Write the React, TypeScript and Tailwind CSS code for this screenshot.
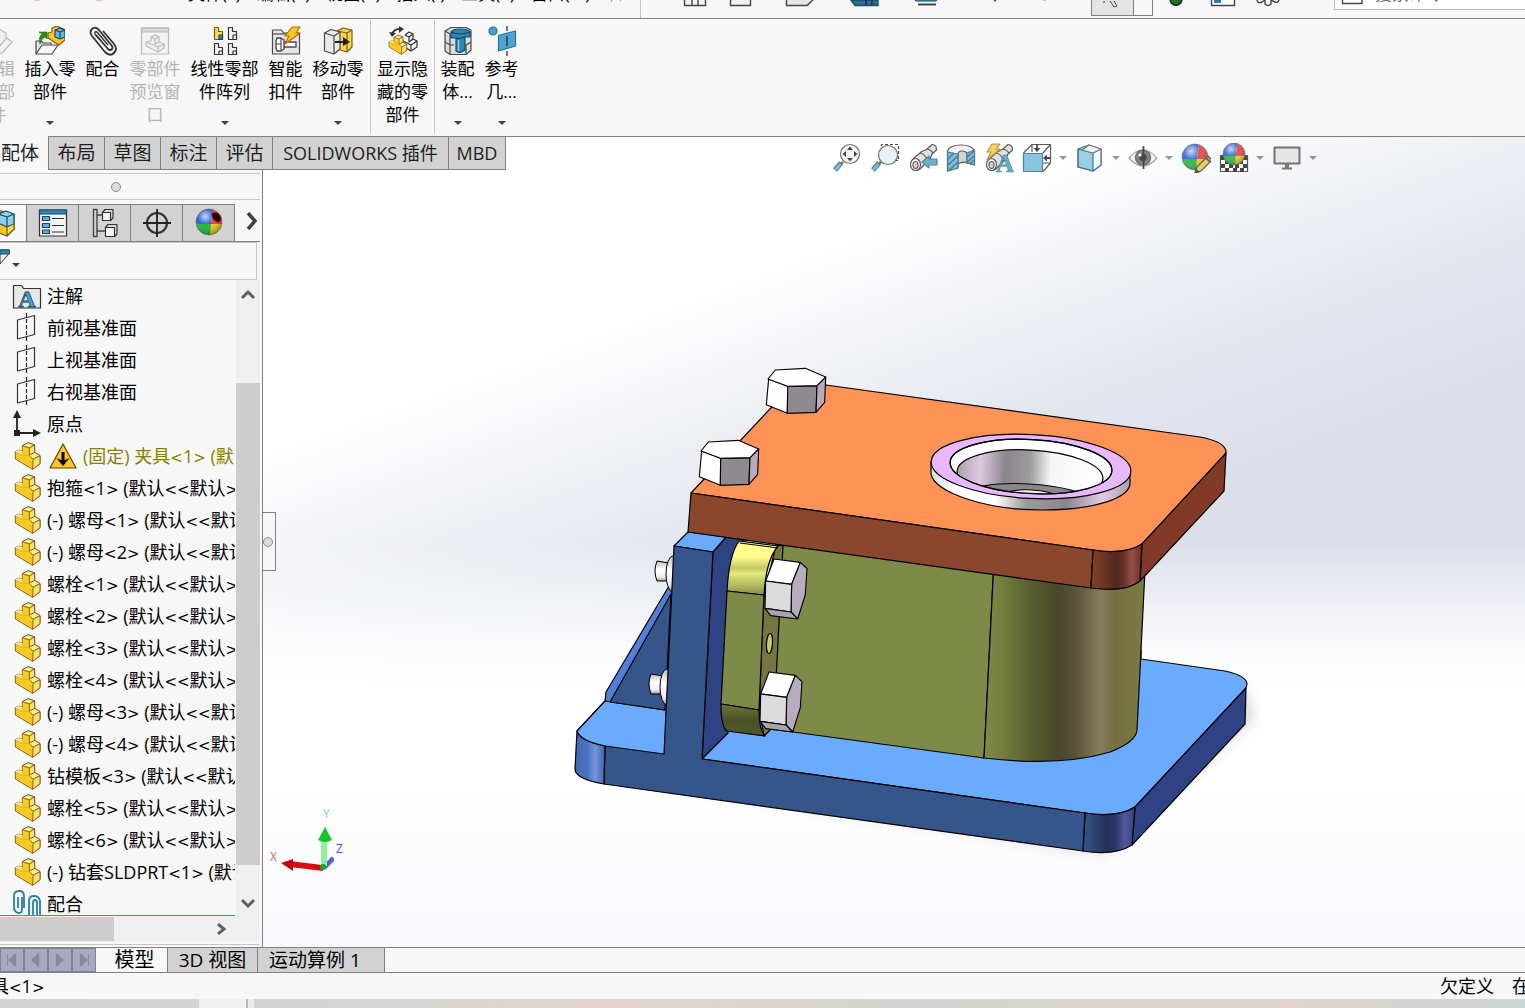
import type { ReactNode } from 'react'

const font = "font-['Open_Sans','Noto_Sans_CJK_SC',sans-serif]"

/* ---------- small shared pieces ---------- */

function Caret({ className = 'text-[#404040]' }: { className?: string }) {
  return (
    <svg width="8" height="4" viewBox="0 0 8 4" className={className}>
      <path d="M0 0h8L4 4z" fill="currentColor" />
    </svg>
  )
}

function Ball({ cx, cy, r, id }: { cx: number; cy: number; r: number; id: string }) {
  return (
    <g>
      <defs>
        <radialGradient id={id} cx="0.36" cy="0.28" r="0.8">
          <stop offset="0" stopColor="#fff" stopOpacity="0.75" />
          <stop offset="0.4" stopColor="#fff" stopOpacity="0.05" />
          <stop offset="1" stopColor="#000" stopOpacity="0.4" />
        </radialGradient>
      </defs>
      <g transform={`translate(${cx} ${cy}) scale(${r})`} stroke="none">
        <path d="M0.15 0.15L0.3 -0.95A1 1 0 0 0 -0.98 0.15z" fill="#2459d0" />
        <path d="M0.15 0.15L0.3 -0.95A1 1 0 0 1 0.98 0.15z" fill="#e23333" />
        <path d="M0.15 0.15L0.1 1A1 1 0 0 0 0.98 0.15z" fill="#f7c80e" />
        <path d="M0.15 0.15L0.1 1A1 1 0 0 1 -0.98 0.15z" fill="#17b532" />
      </g>
      <circle cx={cx} cy={cy} r={r} fill={`url(#${id})`} stroke="#555" strokeWidth="0.6" />
    </g>
  )
}

function Ico({ children, size = 30 }: { children: ReactNode; size?: number }) {
  return (
    <svg width={size} height={size} viewBox="0 0 30 30" fill="none" stroke="#4a4a4a" strokeWidth="1.2" strokeLinejoin="round" className="shrink-0">
      {children}
    </svg>
  )
}

// angle brackets are drawn in a wider face than the rest of the label
function Label({ text }: { text: string }) {
  return text.split(/([<>]+)/).map((s, i) =>
    /[<>]/.test(s) ? <span key={i} className="font-['DejaVu_Sans',sans-serif] text-[15px]">{s}</span> : s,
  )
}

function PartShape() {
  return (
    <g strokeWidth="2.8" stroke="#7a5c10" strokeLinejoin="round">
      <path d="M25 14L42 5L62 12V34L78 44V68L56 85L4 54V32L14 27L25 31z" fill="#fbc926" />
      <path d="M25 14L42 5L62 12L46 21z" fill="#fdee9c" />
      <path d="M46 21L62 12V34L46 43z" fill="#f7e36c" />
      <path d="M46 43L62 34L78 44L57 55z" fill="#fdee9c" />
      <path d="M57 55L78 44V68L56 85z" fill="#f7e36c" />
      <path d="M4 32L14 27L25 31V40z" fill="#fdee9c" stroke="none" />
      <path d="M4 32L25 44L46 43M46 43L57 55M25 14V37" fill="none" strokeWidth="1.5" stroke="#c79a1c" />
    </g>
  )
}

function PartIcon() {
  return (
    <svg width="27" height="30" viewBox="0 0 81 90">
      <PartShape />
    </svg>
  )
}

/* ---------- title / menu row ---------- */

const menus = ['文件(F)', '编辑(E)', '视图(V)', '插入(I)', '工具(T)', '窗口(W)']

function MenuBar() {
  return (
    <header className="flex h-[19px] shrink-0 overflow-hidden border-b border-[#808080] bg-[#f7f7f7]">
      <div className="flex w-[641px] shrink-0 border-r border-[#c6c6c6]">
        <svg width="188" height="6" className="shrink-0">
          <path d="M34 0h6M96 0h7" stroke="#e88" strokeWidth="1" />
        </svg>
        <nav className="-mt-[18px] flex h-6 gap-4 text-[17px] leading-6">
          {menus.map((m) => (
            <button key={m} className="h-6 shrink-0 whitespace-nowrap">{m}</button>
          ))}
        </nav>
        <svg width="20" height="4" className="ml-4 shrink-0">
          <path d="M6 0L5 2M14 0l1 1" stroke="#999" />
        </svg>
      </div>
      <div className="flex flex-1 items-start">
        <svg width="450" height="12" viewBox="641 0 450 12" fill="none" stroke="#444" strokeWidth="1.4" className="shrink-0">
          <path d="M684.5 0V5.500H705.500V0M692 0V5M698 0V5" fill="#f2f2f2" />
          <path d="M730.500 0V5.500H750.500V0" fill="#f2f2f2" />
          <path d="M786.500 0V5.500H807L813 0" fill="#e6e6e6" />
          <path d="M851 0L855 5.500H878V0z" fill="#2c6f94" stroke="#1c4a66" />
          <path d="M866 0V5M872 0V5" stroke="#0d2d42" />
          <path d="M915 0H937M918 4.500H936" strokeWidth="2" />
          <path d="M916 1H936" stroke="#2b80ac" />
          <path d="M994 0L995 1L996 0" stroke="#2a6ca0" />
          <path d="M1043 0h3" stroke="#bbb" />
        </svg>
        <button aria-label="选择" className="h-4 w-[43px] border border-t-0 border-[#808080] bg-[#e4e4e4]">
          <svg width="41" height="14" viewBox="0 0 41 14" fill="none" stroke="#444">
            <path d="M12 0v2M18 0l4 6 3-1-3-5" />
          </svg>
        </button>
        <span className="h-4 w-[19px] border-r border-b border-[#808080]" />
        <svg width="181" height="12" viewBox="1153 0 181 12" fill="none" stroke="#444" strokeWidth="1.4" className="shrink-0">
          <ellipse cx="1176" cy="-1" rx="6" ry="6.500" fill="#1f6d28" stroke="#222" />
          <path d="M1211.500 0V5.500H1234.500V0" fill="#fff" />
          <path d="M1214 0H1221V3H1214z" fill="#2b80ac" stroke="none" />
          <path d="M1257 0q1 4 5 2l3-2v4q3 3 6 0v-4l4 2q3 1 4-2" />
        </svg>
        <div className="flex h-[10px] flex-1 overflow-hidden border-b border-l border-[#b9b9b9] bg-white">
          <svg width="40" height="6" className="shrink-0">
            <path d="M7.500 0V3.500H27V0" fill="none" stroke="#444" strokeWidth="1.400" />
          </svg>
          <input aria-label="搜索命令" placeholder="搜索命令" className="-mt-[18px] h-6 w-full text-[17px] leading-6 placeholder:text-[#666]" />
        </div>
      </div>
    </header>
  )
}

/* ---------- ribbon ---------- */

const icons: Record<string, ReactNode> = {
  edit: (
    <Ico>
      <g opacity="0.35">
        <path d="M6 6l8-4 9 5v9l-9 6-8-5z" fill="#ddd" />
        <path d="M14 23l10-11 5 4-10 11-6 2z" fill="#eee" />
      </g>
    </Ico>
  ),
  insert: (
    <Ico>
      <path d="M1 28V15h5l2 2h8v4" fill="#e4e4e4" />
      <path d="M1 28L7 19H23L17 28z" fill="#f6f6f6" />
      <path d="M5 18Q3 11 7 8L4 6H12V13L10 11Q6 13 5 18z" fill="#2a8f14" stroke="#1a6d14" strokeWidth="0.6" />
      <path d="M13 7V12L24 19L30 14V4L22 0L17 2V6z" fill="#fbc926" stroke="#7a5c10" />
      <path d="M20 4L25 2L30 4V11L25 13L20 11z" fill="#69b4dc" stroke="#174a68" />
      <path d="M20 4L25 6L30 4M25 6V13" stroke="#174a68" />
    </Ico>
  ),
  mate: (
    <Ico>
      <path d="M8 9L20 23Q22 25 24 23Q25 22 24 20L11 4Q7 0 4 3Q1 6 4 10L17 26Q22 31 26 27Q30 23 26 18L15 5" stroke="#333" strokeWidth="1.800" />
      <path d="M11 13L7 8Q6 5 9 6L20 19" stroke="#333" strokeWidth="1.400" />
    </Ico>
  ),
  preview: (
    <Ico>
      <g opacity="0.35">
        <path d="M1.500 2H28.500V28H1.500z" fill="#eee" />
        <path d="M1.500 2H28.500V6H1.500z" fill="#999" />
        <g fill="#e4e4e4">
          <path d="M11 11L15 9L19 11V16L24 18V22L18 26L6 20V16L11 15z" />
          <path d="M11 11L15 13L19 11M15 13V18L19 16M6 16L18 21L24 18M18 21V26" />
        </g>
      </g>
    </Ico>
  ),
  pattern: (
    <Ico>
      <path d="M4.500 1.500H8.500V5.500H12.500V13.500H4.500z" fill="#f9dc5a" stroke="#7a5c10" />
      <path d="M9 9H12.500V13.500H9z" fill="#2b80ac" stroke="#174a68" />
      <path d="M18.500 1.500H22.500V5.500H26.500V13.500H18.500zM4.500 17.500H8.500V21.500H12.500V28.500H4.500zM18.500 17.500H22.500V21.500H26.500V28.500H18.500z" fill="#f2f2f2" stroke="#333" />
      <path d="M23 9h3.500M23 9v4.500M9 25h3.500M9 25v3.500M23 25h3.500M23 25v3.500" stroke="#333" />
    </Ico>
  ),
  smart: (
    <Ico>
      <path d="M1.500 28V4h9l2 3h16v21z" fill="#e6e6e6" />
      <path d="M1.500 8h27" />
      <path d="M13 16H25V21H13z" fill="#fff" strokeWidth="1.400" />
      <path d="M6 12H10L13 14V23L10 25H6L5 22V15z" fill="#fff" strokeWidth="1.400" />
      <path d="M10 12V25M5 18H10" />
      <path d="M21 1H29L25 7H29L14 18L18 10H14z" fill="#fbc926" stroke="#b4680c" />
    </Ico>
  ),
  move: (
    <Ico>
      <path d="M14 5L20 2L29 4V21L24 26L14 23z" fill="#f7d64a" stroke="#7a5c10" />
      <path d="M14 5L24 7L29 4M24 7V26" stroke="#7a5c10" />
      <path d="M1.500 7L8 3.500L17 6V23L11 28L1.500 25z" fill="#e9e9e9" />
      <path d="M1.500 7L11 10L17 6M11 10V28" />
      <path d="M12 16H22" stroke="#222" strokeWidth="2" />
      <path d="M20 11L27 16L20 20z" fill="#222" stroke="none" />
    </Ico>
  ),
  hidden: (
    <Ico>
      <path d="M17 9L21 6L25 8V13L29 15V21L23 25L15 20" fill="#f6f6f6" stroke="#333" />
      <path d="M17 9L21 11L25 8M21 11V16L25 13M15 15L23 19L29 15M23 19V25" stroke="#333" />
      <g transform="translate(0 8) scale(0.24)">
        <PartShape />
      </g>
      <path d="M4 9Q5 3 12 3" stroke="#333" strokeWidth="1.800" />
      <path d="M11 0L16 3L11 7zM1 6L4 11L8 7z" fill="#333" stroke="none" />
    </Ico>
  ),
  assembly: (
    <Ico>
      <path d="M2 5L8 1.500H23L28 4V24L23 28.500H7L2 25z" fill="#dcdcdc" />
      <path d="M2 16L7 19V28M28 16L23 19V28M2 5L7 8V19H11M23 19H21" />
      <path d="M8 6Q10 3 17 3Q25 3 27 6V11H22V24Q17 28 13 25V12H8z" fill="#2b87b3" stroke="#174a68" />
      <path d="M8 6Q17 10 27 6M13 12Q17 13 22 11" stroke="#123f59" />
      <path d="M15.500 14V25" stroke="#8fcbe8" strokeWidth="1.500" />
    </Ico>
  ),
  reference: (
    <Ico>
      <circle cx="6" cy="5" r="4" fill="#4d9fc9" stroke="#2b6f94" />
      <path d="M11.500 9.500L28.500 5V20L11.500 25z" fill="#4da6d2" stroke="#2b6f94" />
      <path d="M20 0v5M20 10v10M20 25v5" stroke="#222" />
    </Ico>
  ),
}

type Tool = { id: string; lines: string[]; w: string; caret?: boolean; off?: boolean }

const groups: Tool[][] = [
  [
    { id: 'edit', lines: ['编辑', '零部', '件'], w: 'w-[34px]', off: true },
    { id: 'insert', lines: ['插入零', '部件'], w: 'w-[52px]', caret: true },
    { id: 'mate', lines: ['配合'], w: 'w-[35px]' },
    { id: 'preview', lines: ['零部件', '预览窗', '口'], w: 'w-[52px]', off: true },
    { id: 'pattern', lines: ['线性零部', '件阵列'], w: 'w-[69px]', caret: true },
    { id: 'smart', lines: ['智能', '扣件'], w: 'w-[35px]' },
    { id: 'move', lines: ['移动零', '部件'], w: 'w-[52px]', caret: true },
  ],
  [{ id: 'hidden', lines: ['显示隐', '藏的零', '部件'], w: 'w-[53px]' }],
  [
    { id: 'assembly', lines: ['装配', '体...'], w: 'w-[35px]', caret: true },
    { id: 'reference', lines: ['参考', '几...'], w: 'w-[35px]', caret: true },
  ],
]

function Ribbon() {
  return (
    <div className="flex h-[117px] shrink-0 items-start overflow-hidden bg-[#f7f7f7] pt-px">
      {groups.map((tools, i) => (
        <div key={i} className={`flex h-[113px] gap-[9px] px-[5px] pt-[6px] ${i < 2 ? 'border-r border-[#c6c6c6]' : ''} ${i === 0 ? '-ml-6 pr-[6px]' : ''}`}>
          {tools.map((t) => (
            <button key={t.id} disabled={t.off} className={`flex h-[105px] shrink-0 flex-col items-center whitespace-nowrap text-[17px] leading-[23px] ${t.w} ${t.off ? 'text-[#b4b4b4]' : 'text-black'}`}>
              <span className="mb-px">{icons[t.id]}</span>
              {t.lines.map((l) => (
                <span key={l} className="h-[23px]">{l}</span>
              ))}
              {t.caret && (
                <span className="mt-auto mb-[6px]">
                  <Caret />
                </span>
              )}
            </button>
          ))}
        </div>
      ))}
    </div>
  )
}

const tabs = [
  { label: '布局', w: 'w-14' },
  { label: '草图', w: 'w-14' },
  { label: '标注', w: 'w-14' },
  { label: '评估', w: 'w-14' },
  { label: 'SOLIDWORKS 插件', w: 'w-44' },
  { label: 'MBD', w: 'w-[57px]' },
]

function CommandTabs() {
  return (
    <div className="z-10 flex h-[34px] w-max shrink-0 text-[19px] text-[#1e1e1e]">
      <button className="flex w-12 items-center justify-end overflow-hidden bg-[#f7f7f7] pr-[9px] whitespace-nowrap">装配体</button>
      <div className="flex border-y border-l border-[#808080]">
        {tabs.map((t) => (
          <button key={t.label} className={`flex items-center justify-center border-r border-[#808080] bg-[#d2d2d2] whitespace-nowrap ${t.label.length > 2 ? 'text-[18px]' : ''} ${t.w}`}>
            {t.label}
          </button>
        ))}
      </div>
    </div>
  )
}

/* ---------- feature tree ---------- */

const planeIcon = (
  <Ico>
    <path d="M5.500 7L22.500 2.500V21.500L5.500 26z" stroke="#333" />
    <path d="M14.500 0v30" stroke="#222" strokeDasharray="4 2" />
  </Ico>
)

const part = <PartIcon />

const tree: { icon: ReactNode; text: string; warn?: boolean }[] = [
  {
    icon: (
      <Ico>
        <path d="M1.500 27V4.500h8l2 3h17V27z" fill="#e8e8e8" stroke="#333" />
        <text x="15" y="26" textAnchor="middle" fontFamily="Liberation Serif" fontWeight="700" fontSize="24" fill="#4ba3cb" stroke="#174a68" strokeWidth="0.8">A</text>
      </Ico>
    ),
    text: '注解',
  },
  { icon: planeIcon, text: '前视基准面' },
  { icon: planeIcon, text: '上视基准面' },
  { icon: planeIcon, text: '右视基准面' },
  {
    icon: (
      <Ico>
        <path d="M5 24V6M5 24h18" stroke="#222" strokeWidth="1.800" />
        <path d="M5 1L9 9H1zM29 24l-8-4v8zM2 21h6v6H2z" fill="#222" stroke="none" />
      </Ico>
    ),
    text: '原点',
  },
  { icon: part, text: '(固定) 夹具<1> (默认<<默认>', warn: true },
  { icon: part, text: '抱箍<1> (默认<<默认>' },
  { icon: part, text: '(-) 螺母<1> (默认<<默认>' },
  { icon: part, text: '(-) 螺母<2> (默认<<默认>' },
  { icon: part, text: '螺栓<1> (默认<<默认>' },
  { icon: part, text: '螺栓<2> (默认<<默认>' },
  { icon: part, text: '螺栓<3> (默认<<默认>' },
  { icon: part, text: '螺栓<4> (默认<<默认>' },
  { icon: part, text: '(-) 螺母<3> (默认<<默认>' },
  { icon: part, text: '(-) 螺母<4> (默认<<默认>' },
  { icon: part, text: '钻模板<3> (默认<<默认>' },
  { icon: part, text: '螺栓<5> (默认<<默认>' },
  { icon: part, text: '螺栓<6> (默认<<默认>' },
  { icon: part, text: '(-) 钻套SLDPRT<1> (默认' },
  {
    icon: (
      <Ico>
        <g stroke="#2b7ea8" strokeWidth="1.800">
          <path d="M10 8V20Q10 24 7 24T2 20V7Q2 2 7 2T12 7V19M6 8V19" />
          <path d="M17 28V12Q17 7 22 7T28 12V28M21 28V14Q21 11 23 11T25 14V26" />
        </g>
      </Ico>
    ),
    text: '配合',
  },
]

const panelTabs: { name: string; icon: ReactNode }[] = [
  {
    name: '属性',
    icon: (
      <Ico>
        <path d="M1.500 2H28.500V28H1.500z" fill="#f4f4f4" stroke="#333" />
        <path d="M1.500 2H28.500V6H1.500z" fill="#2b87b3" stroke="#174a68" />
        <path d="M4.500 8.500H11.500V12.500H4.500zM4.500 15.500H11.500V19.500H4.500zM4.500 22H11.500V25.500H4.500z" fill="#5fb0d8" stroke="#174a68" />
        <path d="M14 10.500h12M14 17.500h12M14 24h12" stroke="#333" />
      </Ico>
    ),
  },
  {
    name: '配置',
    icon: (
      <Ico>
        <path d="M3.500 1.500H7V28.500H3.500zM7 7H12M7 23H15" stroke="#444" strokeWidth="1.400" />
        <path d="M12.500 4.500L15 1.500H23V10L20.500 12.500zM15.500 19.500L18 16.500H27V26L24.500 28.500z" fill="#d8d8d8" stroke="#333" />
        <path d="M12.500 4.500H20.500V12.500H12.500zM15.500 19.500H24.500V28.500H15.500z" fill="#f4f4f4" stroke="#333" />
      </Ico>
    ),
  },
  {
    name: '公差',
    icon: (
      <Ico>
        <circle cx="15" cy="15" r="10" stroke="#333" strokeWidth="2.200" />
        <path d="M15 1v28M1 15h28" stroke="#222" strokeWidth="1.800" />
      </Ico>
    ),
  },
  {
    name: '外观',
    icon: (
      <Ico>
        <Ball cx={15} cy={14} r={13} id="ballPanel" />
        <path d="M18 5Q25 3 27 10Q27 15 23 14Q17 11 18 5z" fill="#1b0505" stroke="#a02020" strokeWidth="0.8" />
      </Ico>
    ),
  },
]

function Tree() {
  return (
    <ul className="min-h-0 flex-1 overflow-hidden border-b border-[#3c8fc0] text-[18px]">
      {tree.map((row, i) => (
        <li key={i} className={`flex h-8 items-center pl-[13px] whitespace-nowrap ${row.warn ? 'text-[#868000]' : 'text-black'}`}>
          <span className="flex w-7 shrink-0 items-center justify-center">{row.icon}</span>
          {row.warn && (
            <svg width="28" height="26" viewBox="0 0 28 26" className="ml-2 shrink-0">
              <path d="M14 1L27 25H1z" fill="#fdc52e" stroke="#5d4708" strokeWidth="1.200" strokeLinejoin="round" />
              <path d="M14 9v9" stroke="#000" strokeWidth="3" />
              <path d="M7.500 15L14 18L20.500 15L14 23z" fill="#000" />
            </svg>
          )}
          <span className="ml-[6px]">
            <Label text={row.text} />
          </span>
        </li>
      ))}
    </ul>
  )
}

function FeaturePanel() {
  return (
    <div className="flex min-h-0 flex-1 flex-col border-r border-[#808080] bg-[#f7f7f7] pr-[2px]">
      <div className="h-1 shrink-0 border-b border-[#c6c6c6]" />
      <div className="flex h-[26px] shrink-0 items-center justify-center border-b border-[#c6c6c6] pr-7">
        <span className="size-[10px] rounded-full border border-[#8a8a8a] bg-[#dcdcdc]" />
      </div>
      <div className="mt-1 flex h-[38px] shrink-0 border-b border-[#808080]">
        <button aria-label="设计树" className="flex w-[26px] items-center justify-end overflow-hidden border-t border-[#808080] pr-[11px]">
          <Ico>
            <path d="M1 8L13 2L29 7V21L22 28L1 20z" fill="#fbc926" stroke="#7a5c10" />
            <path d="M13 6L21 3L29 6V16L22 19L13 15z" fill="#8fd0ee" stroke="#174a68" />
            <path d="M13 6L22 9L29 6M22 9V19" stroke="#174a68" />
            <path d="M22 19V28L29 21V16z" fill="#fddc5c" stroke="#7a5c10" />
          </Ico>
        </button>
        <div className="flex border-t border-l border-[#808080]">
          {panelTabs.map((t) => (
            <button key={t.name} aria-label={t.name} className="flex w-[52px] items-center justify-center border-r border-[#808080] bg-[#d2d2d2]">
              {t.icon}
            </button>
          ))}
        </div>
        <button aria-label="更多" className="flex flex-1 items-center justify-center pb-1 pl-2">
          <svg width="12" height="18" viewBox="0 0 12 18" fill="none" stroke="#404040" strokeWidth="3.500">
            <path d="M2 1l7 8-7 8" />
          </svg>
        </button>
      </div>
      <div className="mr-[3px] flex h-[38px] shrink-0 items-start border-y border-r border-[#c6c6c6] pt-[5px]">
        <button aria-label="过滤器" className="flex items-end">
          <svg width="12" height="19" viewBox="0 0 12 19">
            <path d="M0 2H9.500V5L0 16z" fill="#eee" stroke="#333" />
            <path d="M0 2H9.500V6H0z" fill="#2b87b3" stroke="#174a68" />
          </svg>
          <Caret />
        </button>
      </div>
      <div className="flex min-h-0 flex-1">
        <div className="flex min-w-0 flex-1 flex-col">
          <Tree />
        </div>
        <div className="ml-px flex w-6 shrink-0 flex-col items-center bg-[#f0f0f0] pt-[10px]">
          <svg width="14" height="10" viewBox="0 0 14 10" fill="none" stroke="#606060" strokeWidth="3" className="shrink-0">
            <path d="M1 8l6-6 6 6" />
          </svg>
          <div className="mt-[83px] mb-[33px] w-full flex-1 bg-[#cdcdcd]" />
          <svg width="14" height="10" viewBox="0 0 14 10" fill="none" stroke="#606060" strokeWidth="3" className="mb-2 shrink-0">
            <path d="M1 2l6 6 6-6" />
          </svg>
        </div>
      </div>
      <div className="flex h-[26px] shrink-0 items-center bg-[#f0f0f0]">
        <div className="h-6 w-[114px] bg-[#cdcdcd]" />
        <svg width="10" height="12" viewBox="0 0 10 12" fill="none" stroke="#606060" strokeWidth="3" className="ml-[103px]">
          <path d="M1 1l6 5-6 5" />
        </svg>
      </div>
      <div className="mt-[2px] h-[3px] shrink-0 border-t border-[#c6c6c6]" />
    </div>
  )
}

/* ---------- graphics area ---------- */

const lens = (
  <>
    <path d="M11 19L8 22" stroke="#666" strokeWidth="2.500" />
    <path d="M9 20L3 27" stroke="#3a6f88" strokeWidth="5" />
    <path d="M8.500 21L3.500 26.500" stroke="#6db4d3" strokeWidth="3" />
  </>
)

const scope = (
  <>
    <path d="M5 16L12 10L13 9L19 6L24 1.500Q29 2 28.500 7L24 11L22 16L12 26Q7 29 3 24z" fill="#dedede" />
    <ellipse cx="7.500" cy="21.500" rx="5" ry="6" fill="#fafafa" />
    <ellipse cx="7.500" cy="22" rx="2.500" ry="3.500" fill="#ccc" />
    <path d="M12 10Q18 11 19 18M19 6Q24 7 25 11" />
  </>
)

const viewTools: { name: string; icon: ReactNode; caret?: boolean }[] = [
  {
    name: '整屏显示全图',
    icon: (
      <Ico>
        {lens}
        <circle cx="18" cy="11" r="9.500" fill="#f1f6f9" stroke="#666" />
        <path d="M18 3.500l3 3.500h-6zM18 18.500l3-3.500h-6zM10.500 11l3.500-3v6zM25.500 11l-3.500-3v6z" fill="#333" stroke="none" />
      </Ico>
    ),
  },
  {
    name: '局部放大',
    icon: (
      <Ico>
        {lens}
        <path d="M11.500 3V1.500H28.500V17.500H23" strokeDasharray="3 2" stroke="#333" />
        <circle cx="18" cy="12" r="9.500" fill="#e7f0f4" stroke="#666" />
      </Ico>
    ),
  },
  {
    name: '上一视图',
    icon: (
      <Ico>
        {scope}
        <path d="M14 19L21 13V16H29V22H21V25z" fill="#5fa9ca" stroke="#3a7896" />
      </Ico>
    ),
  },
  {
    name: '剖面视图',
    icon: (
      <Ico>
        <path d="M1.500 8Q4 2 15 2T28.500 8V22L21 20V11L12 12V25L1.500 28z" fill="#f2f2f2" />
        <path d="M12 12Q12 8 16 8T21 11V20Q17 18 12 21z" fill="#cfcfcf" />
        <path d="M1.500 9L12 11V25L1.500 28zM21 10L28.500 7V22L21 19.500z" fill="#6db4d3" stroke="#3a6f88" />
        <path d="M2 16L8 10M2 22L12 13M3 27L12 19M21 14L28 8M21 19L28 13M24 21L28 17" stroke="#35687f" />
      </Ico>
    ),
  },
  {
    name: '动态注解视图',
    icon: (
      <Ico>
        {scope}
        <path d="M8 1H16L12 6H16L3 17L7 9H3z" fill="#fbcf4f" stroke="#b98a30" />
        <text x="21" y="29" textAnchor="middle" fontFamily="Liberation Serif" fontWeight="700" fontSize="25" fill="#5aa6c8" stroke="#35728f" strokeWidth="0.6">A</text>
      </Ico>
    ),
  },
  {
    name: '视图定向',
    caret: true,
    icon: (
      <Ico>
        <path d="M1.500 10L10 1.500H28.500V20L21 28.500M21 10l7.500-8.500M10 2v7M21 20h7" />
        <path d="M1.500 10.500H20.500V28.500H1.500z" fill="#7fc0de" stroke="#3a7896" />
        <path d="M15 1v5M28 15h-4" stroke="#333" strokeWidth="1.800" />
        <path d="M11.500 5H18.500L15 9zM25 11.500V18.500L21 15z" fill="#333" stroke="none" />
      </Ico>
    ),
  },
  {
    name: '显示样式',
    caret: true,
    icon: (
      <Ico>
        <path d="M3 6L14 2L26 6V22L18 28L3 24z" fill="#8ecbe4" stroke="#35687f" />
        <path d="M18 10L26 6V22L18 28z" fill="#f4f8fa" stroke="none" />
        <path d="M3 6L18 10L26 6M18 10V28M3 6V24L18 28L26 22V6" stroke="#35687f" />
        <path d="M14 2L26 6L18 10L7 7z" fill="#f0f6f9" stroke="#666" />
      </Ico>
    ),
  },
  {
    name: '隐藏/显示项目',
    caret: true,
    icon: (
      <Ico>
        <path d="M1 15Q14-1 29 15Q15 31 1 15z" fill="#f0f0f0" stroke="#999" />
        <circle cx="15" cy="14.500" r="7.500" fill="#777" stroke="#555" />
        <circle cx="15" cy="14.500" r="3.500" fill="#333" />
        <circle cx="12" cy="12" r="1.500" fill="#fff" stroke="none" />
        <path d="M15.500 3v23" stroke="#333" strokeWidth="1.800" />
      </Ico>
    ),
  },
  {
    name: '编辑外观',
    icon: (
      <Ico>
        <Ball cx={14} cy={14} r={13} id="ballEdit" />
        <path d="M14 30L16 24L25 15L29 19L20 28z" fill="#f0c756" stroke="#555" />
        <path d="M14 30L15 26.500L18 29z" fill="#333" />
        <path d="M25 15L27 13L31 17L29 19z" fill="#e58080" />
      </Ico>
    ),
  },
  {
    name: '应用布景',
    caret: true,
    icon: (
      <Ico>
        <path d="M1.500 12.500H28.500V28.500H1.500z" fill="#fff" stroke="#444" />
        <path d="M2 13h4v4H2zM24 13h4v4h-4zM6 17h4v4H6zM20 17h4v4h-4zM2 21h4v4H2zM10 21h4v4h-4zM16 21h4v4h-4zM24 21h4v4h-4zM6 25h4v4H6zM14 25h4v4h-4zM21 25h4v4h-4z" fill="#333" stroke="none" />
        <Ball cx={15} cy={11} r={11} id="ballScene" />
      </Ico>
    ),
  },
  {
    name: '视图设置',
    caret: true,
    icon: (
      <Ico>
        <path d="M2.500 4.500H27.500V20.500H2.500z" fill="#e5e5e5" stroke="#666" strokeWidth="2" />
        <path d="M14 21h2v3h-2zM10 25.500H20" fill="#666" stroke="#666" strokeWidth="2" />
      </Ico>
    ),
  },
]

function ViewToolbar() {
  return (
    <div className="absolute inset-x-0 top-[6px] flex justify-end gap-2 pr-[208px] opacity-90">
      {viewTools.map((t) => (
        <button key={t.name} aria-label={t.name} className="flex items-center gap-[7px]">
          {t.icon}
          {t.caret && <Caret className="text-[#8a8a8a]" />}
        </button>
      ))}
    </div>
  )
}

function TopBolt({ x, y }: { x: number; y: number }) {
  return (
    <g transform={`translate(${x} ${y}) scale(0.3333)`} strokeWidth="3.4">
      <path d="M8 30L1 107L64 133L65 52z" fill="#fff" />
      <path d="M65 52L153 50L150 130L64 133z" fill="#8f8a90" />
      <path d="M153 50L179 24L176 100L150 130z" fill="#baaabf" />
      <path d="M6 30L28 3L118 -2L179 24L153 50L65 52z" fill="#fff" />
    </g>
  )
}

function SideBolt({ x, y }: { x: number; y: number }) {
  return (
    <g transform={`translate(${x} ${y}) scale(0.3333)`} strokeWidth="3.4">
      <path d="M27 0L106 10L80 76L2 66z" fill="#fff" />
      <path d="M106 10L126 29L121 107L98 180L78 159L80 76z" fill="#b9abbe" />
      <path d="M2 66L80 76L78 159L0 148z" fill="#dcdcdc" />
      <path d="M0 148L78 159L98 180L17 170z" fill="#a9a5ac" />
    </g>
  )
}

function Stud({ x, y }: { x: number; y: number }) {
  return (
    <g strokeWidth="1">
      <path d={`M${x + 2} ${y}L${x + 14} ${y + 2}V${y + 20}L${x + 2} ${y + 20}Q${x - 2} ${y + 10} ${x + 2} ${y}z`} fill="url(#stud)" />
      <ellipse cx={x + 18} cy={y + 13} rx="7" ry="18" fill="url(#stud)" />
    </g>
  )
}

function Grad({ id, stops, vertical }: { id: string; stops: [number, string][]; vertical?: boolean }) {
  return (
    <linearGradient id={id} x1="0" y1="0" x2={vertical ? 0 : 1} y2={vertical ? 1 : 0}>
      {stops.map(([o, c]) => (
        <stop key={o} offset={o} stopColor={c} />
      ))}
    </linearGradient>
  )
}

function Model() {
  return (
    <svg viewBox="263 137 1262 810" className="absolute inset-0 h-full w-full" stroke="#000" strokeWidth="1.2" strokeLinejoin="round" fill="none">
      <defs>
        <Grad id="barrel" stops={[[0, '#808b48'], [0.13, '#707b3d'], [0.3, '#565d2e'], [0.46, '#484728'], [0.56, '#56533a'], [0.72, '#867b5c'], [0.82, '#76703f'], [1, '#7b7c43']]} />
        <Grad id="baseLeft" stops={[[0, '#4068b2'], [0.4, '#4a72c0'], [0.68, '#7595dc'], [0.9, '#5074b8'], [1, '#3b5c96']]} />
        <Grad id="baseRight" stops={[[0, '#36558a'], [0.45, '#22305a'], [0.62, '#2b3768'], [0.8, '#54589a'], [1, '#2f4384']]} />
        <Grad id="topRight" stops={[[0, '#81422a'], [0.5, '#54281b'], [0.65, '#6a3226'], [0.8, '#944e4a'], [1, '#6d2f22']]} />
        <Grad id="ringSide" stops={[[0, '#d8d8d8'], [0.12, '#fff'], [0.32, '#fff'], [0.48, '#9a9a9a'], [0.68, '#8d858e'], [0.86, '#e2cbe4'], [1, '#a8a0a8']]} />
        <Grad id="bore" stops={[[0, '#aba2ad'], [0.16, '#e0c8e2'], [0.33, '#8b858d'], [0.5, '#9c9c9c'], [0.64, '#f6f6f6'], [1, '#fff']]} />
        <Grad id="lug" vertical stops={[[0, '#fbfc88'], [0.3, '#fdfe8e'], [0.5, '#c3c75e'], [0.6, '#e6e97a'], [1, '#86904a']]} />
        <Grad id="lugFoot" vertical stops={[[0, '#6d783c'], [0.5, '#4a5027'], [1, '#525a2b']]} />
        <Grad id="stud" vertical stops={[[0, '#bbb'], [0.4, '#fff'], [0.8, '#eee'], [1, '#999']]} />
        <clipPath id="ringHole">
          <ellipse cx="1031" cy="466.500" rx="81" ry="27" transform="rotate(3 1031 466.500)" />
        </clipPath>
        <clipPath id="boreHole">
          <ellipse cx="1030" cy="475" rx="73" ry="25" transform="rotate(3 1030 475)" />
        </clipPath>
        <filter id="soft" x="-10%" y="-10%" width="120%" height="130%">
          <feGaussianBlur stdDeviation="7" />
        </filter>
      </defs>

      <path d="M590 770L1105 852L1252 718L1244 690L900 700z" fill="#8a8a92" opacity="0.45" stroke="none" filter="url(#soft)" />

      {/* base plate */}
      <path d="M577 731L605 701L665 650H1141V659L1225 671Q1247 676 1247 684L1246 688L1135 807Q1118 818 1085 813L703 759H664L605 746Q580 741 577 731z" fill="#6aabff" />
      <path d="M1135 807L1246 688L1245 724L1132 845z" fill="#2f4384" />
      <path d="M1085 813Q1118 818 1135 807L1132 845Q1115 856 1083 851z" fill="url(#baseRight)" />

      {/* rib and left studs */}
      <path d="M670 585L606 692L605 701L665 710V754L690 640z" fill="#4f7fd8" stroke="none" />
      <path d="M605 701L665 710L664 754L605 746Q580 741 577 731z" fill="#6aabff" stroke="none" />
      <path d="M577 731L605 701L665 710M605 701L606 692L669 586" />
      <path d="M671 594L610 702L665 710z" fill="#36558a" />
      <Stud x={655} y={561} />
      <Stud x={649} y={674} />

      {/* upright and front face */}
      <path d="M713 552L726 537L746 540L728 733L702 759z" fill="#2f4384" />
      <path d="M674 546L688 532L726 537L713 552z" fill="#6aabff" />
      <path d="M605 746L664 754L674 546L713 552L702 759L1085 813L1083 851L604 784z" fill="#36558a" />
      <path d="M577 731Q580 741 605 746L604 784Q575 779 575 769z" fill="url(#baseLeft)" />

      {/* clamp body */}
      <path d="M782 540L994 560L984 758L771 729z" fill="#7e8a47" />
      <path d="M994 560L1145 570L1137 730Q1136 742 1110 752Q1060 767 984 758z" fill="url(#barrel)" />
      <path d="M776 545L783 546L776 680L772 728L764 736L759 710L764 595z" fill="#777541" />
      <path d="M739 541L778 546Q766 560 764 595L727 591Q729 555 739 541z" fill="url(#lug)" />
      <path d="M740 543L778 548" strokeWidth="1" />
      <path d="M727 591L764 595L759 710L721 704z" fill="#7e8a47" />
      <path d="M721 704L759 710Q759 730 765 736L727 731Q721 727 721 704z" fill="url(#lugFoot)" />
      <ellipse cx="769.500" cy="643.500" rx="3" ry="10" fill="#c8cc6a" transform="rotate(4 769.500 643.500)" />
      <SideBolt x={765} y={559} />
      <SideBolt x={760} y={672} />

      {/* drill plate */}
      <path d="M691 493L785 393L826 385L1200 437Q1226 442 1226 452L1225 456L1142 544Q1125 555 1093 550z" fill="#ff9257" />
      <path d="M691 493L1093 550L1091 588L688 532z" fill="#8a472d" />
      <path d="M1142 544L1226 453L1224 491L1140 581z" fill="#823a28" />
      <path d="M1093 550Q1125 555 1142 544L1140 581Q1125 593 1091 588z" fill="url(#topRight)" />

      {/* bushing */}
      <path d="M931 462V474C934 492 985 510 1042 510C1095 510 1130 498 1130 483V471z" fill="url(#ringSide)" />
      <ellipse cx="1031" cy="466.500" rx="100" ry="32" fill="#e8b8ff" transform="rotate(2.900 1031 466.500)" />
      <ellipse cx="1031" cy="466.500" rx="81" ry="27" fill="#fff" transform="rotate(3 1031 466.500)" />
      <g clipPath="url(#ringHole)">
        <ellipse cx="1030" cy="475" rx="73" ry="25" fill="url(#bore)" transform="rotate(3 1030 475)" />
        <g clipPath="url(#boreHole)" strokeWidth="1">
          <ellipse cx="1028" cy="497" rx="60" ry="13" fill="#8b858d" transform="rotate(3 1028 497)" />
          <ellipse cx="1031" cy="497" rx="28" ry="7" fill="#f4f4f4" transform="rotate(3 1031 497)" />
        </g>
      </g>
      <ellipse cx="1031" cy="466.500" rx="81" ry="27" transform="rotate(3 1031 466.500)" />

      <TopBolt x={766} y={369} />
      <TopBolt x={699} y={441} />

      {/* axis triad */}
      <g stroke="none">
        <path d="M323 866L331 857Q334 856 334 861L326 869z" fill="#5a5ae0" />
        <path d="M321 840H327V866H321z" fill="#8df09a" />
        <path d="M325 827L332 840Q325 844 318 840z" fill="#14c42a" />
        <path d="M290 861L322 865L323 871L290 867z" fill="#d80d0d" />
        <path d="M281 863L293 859V871z" fill="#c00a0a" />
        <circle cx="323" cy="867" r="3" fill="#13a825" />
        <g fontFamily="Open Sans" fontSize="12">
          <text x="270" y="861" fill="#f05a5a">X</text>
          <text x="323" y="818" fill="#7de08a">Y</text>
          <text x="336" y="853" fill="#4a4af0">Z</text>
        </g>
      </g>
    </svg>
  )
}

function Viewport() {
  return (
    <main className="relative min-w-0 flex-1 overflow-hidden border-t border-[#808080] bg-[linear-gradient(to_bottom,transparent_50%,#ffffffa0_59%,#ffffffe8_64%,#fff_68%,#fff_80%,#f7f8fb_100%),linear-gradient(160deg,#fff_25%,#f1f2f6_34%,#e4e7ee_43%,#dcdee9_54%)]">
      <Model />
      <ViewToolbar />
      <button aria-label="折叠面板" className="absolute top-[375px] left-0 flex h-[59px] w-[13px] items-center border border-l-0 border-[#808080] bg-[#f7f7f7]">
        <span className="size-[10px] rounded-full border border-[#8a8a8a] bg-[#dcdcdc]" />
      </button>
    </main>
  )
}

/* ---------- bottom ---------- */

const navGlyphs = [
  { name: '第一页', d: 'M7 5v14M16 5v14l-8-7z' },
  { name: '上一页', d: 'M15 5v14l-8-7z' },
  { name: '下一页', d: 'M8 5v14l8-7z' },
  { name: '最后一页', d: 'M17 5v14M8 5v14l8-7z' },
]

function BottomTabs() {
  return (
    <div className="flex h-[26px] shrink-0 border-y border-[#808080] bg-[#f7f7f7] text-[20px] leading-6">
      {navGlyphs.map((g) => (
        <button key={g.name} aria-label={g.name} className="w-6 border border-[#82829c] bg-[#a9a9c0]">
          <svg width="22" height="22" viewBox="0 0 24 24" fill="#84849e" stroke="#84849e">
            <path d={g.d} />
          </svg>
        </button>
      ))}
      <button className="w-[72px] border-r border-[#808080] pl-[6px]">模型</button>
      <button className="w-[90px] border-r border-[#808080] bg-[#d2d2d2] text-[19px] whitespace-nowrap">3D 视图</button>
      <button className="w-[127px] border-r border-[#808080] bg-[#d2d2d2] pr-3 text-[19px] whitespace-nowrap">运动算例 1</button>
    </div>
  )
}

export default function App() {
  return (
    <div className={`flex h-screen flex-col overflow-hidden bg-[#f7f7f7] text-black ${font}`}>
      <MenuBar />
      <Ribbon />
      <div className="flex min-h-0 flex-1">
        <aside className="flex w-[263px] shrink-0 flex-col">
          <CommandTabs />
          <FeaturePanel />
        </aside>
        <Viewport />
      </div>
      <BottomTabs />
      <footer className="flex h-[26px] shrink-0 items-center justify-between overflow-hidden pt-px text-[18px] whitespace-nowrap">
        <span className="-ml-[9px]">
          <Label text="具<1>" />
        </span>
        <span className="-mr-[5px] flex gap-[18px]">
          <span>欠定义</span>
          <span>在</span>
        </span>
      </footer>
      <div className="flex h-[9px] shrink-0 bg-[linear-gradient(to_right,#d3d3d2_0%,#d6d5d3_25%,#e2d5cc_40%,#d5d4d0_60%,#e0d4cb_85%,#d0d5d5_97%)]">
        <span className="ml-[199px] w-[49px] border-r-2 border-[#b8b8b8] bg-[#f0f0f0]" />
        <span className="w-[6px] bg-[#ececec]" />
      </div>
    </div>
  )
}
